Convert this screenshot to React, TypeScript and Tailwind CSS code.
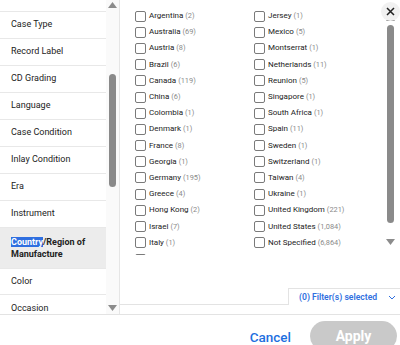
import React from 'react';

const CATEGORIES = [
  'Case Type',
  'Record Label',
  'CD Grading',
  'Language',
  'Case Condition',
  'Inlay Condition',
  'Era',
  'Instrument',
];

const COL_A: [string, string][] = [
  ['Argentina', '(2)'],
  ['Australia', '(69)'],
  ['Austria', '(8)'],
  ['Brazil', '(6)'],
  ['Canada', '(119)'],
  ['China', '(6)'],
  ['Colombia', '(1)'],
  ['Denmark', '(1)'],
  ['France', '(8)'],
  ['Georgia', '(1)'],
  ['Germany', '(195)'],
  ['Greece', '(4)'],
  ['Hong Kong', '(2)'],
  ['Israel', '(7)'],
  ['Italy', '(1)'],
];

const COL_B: [string, string][] = [
  ['Jersey', '(1)'],
  ['Mexico', '(5)'],
  ['Montserrat', '(1)'],
  ['Netherlands', '(11)'],
  ['Reunion', '(5)'],
  ['Singapore', '(1)'],
  ['South Africa', '(1)'],
  ['Spain', '(11)'],
  ['Sweden', '(1)'],
  ['Switzerland', '(1)'],
  ['Taiwan', '(4)'],
  ['Ukraine', '(1)'],
  ['United Kingdom', '(221)'],
  ['United States', '(1,084)'],
  ['Not Specified', '(6,864)'],
];

function Arrow({ up }: { up?: boolean }) {
  return (
    <svg width="9" height="6" viewBox="0 0 9 6" aria-hidden>
      <path d={up ? 'M4.5 0 L9 6 L0 6 Z' : 'M0 0 L9 0 L4.5 6 Z'} fill="#8c8c8c" />
    </svg>
  );
}

function Box() {
  return <span className="h-[11px] w-[11px] shrink-0 rounded-[2px] border border-[#7a7a7a] bg-white" />;
}

function CountryRow({ name, count }: { name: string; count: string }) {
  return (
    <label className="flex h-[16.2px] shrink-0 items-center gap-[3px]">
      <Box />
      <span className="whitespace-nowrap text-[8px] text-[#222]">
        {name} <span className="text-[7.4px] text-[#8a8a8a]">{count}</span>
      </span>
    </label>
  );
}

export default function App() {
  return (
    <div
      className="relative flex h-[345px] w-[400px] flex-col overflow-hidden bg-white"
      style={{ fontFamily: 'Roboto, "Liberation Sans", sans-serif' }}
    >
      <div className="flex h-[315px] shrink-0 border-b border-[#e3e3e3]">
        {/* category list */}
        <div className="flex w-[120px] shrink-0 border-r border-[#e6e6e6]">
          <div className="w-[106px] shrink-0 overflow-hidden">
            <div className="mt-[-15px] flex flex-col">
              <div className="h-[27px] border-b border-[#e8e8e8]" />
              {CATEGORIES.map((c) => (
                <div
                  key={c}
                  className="flex h-[27px] items-center border-b border-[#e8e8e8] pl-[11px] text-[9px] text-[#222]"
                >
                  {c}
                </div>
              ))}
              <div className="flex h-[41px] items-center border-b border-[#e8e8e8] bg-[#ececec] pl-[11px] text-[9px] font-bold leading-[12px] text-[#222]">
                <span>
                  <span className="bg-[#2f6fe0] text-white">Country</span>/Region of
                  <br />
                  Manufacture
                </span>
              </div>
              <div className="flex h-[26px] items-center border-b border-[#e8e8e8] pl-[11px] text-[9px] text-[#222]">
                Color
              </div>
              <div className="flex h-[27px] items-center pl-[11px] text-[9px] text-[#222]">
                Occasion
              </div>
            </div>
          </div>
          <div className="flex w-[13px] shrink-0 flex-col items-center bg-[#fafafa] pt-[2px]">
            <Arrow up />
            <div className="mt-[66px] h-[113px] w-[7px] rounded-full bg-[#8a8a8a]" />
            <div className="flex-1" />
            <div className="mb-[3px]">
              <Arrow />
            </div>
          </div>
        </div>

        {/* country checkboxes */}
        <div className="flex min-w-0 flex-1 flex-col">
          <div className="flex h-[255px] shrink-0">
            <div className="flex flex-1 overflow-hidden pl-[15px] pt-[8px]">
              <div className="flex w-[119px] shrink-0 flex-col">
                {COL_A.map(([n, c]) => (
                  <CountryRow key={n} name={n} count={c} />
                ))}
                <div className="mt-[3px] flex">
                  <Box />
                </div>
              </div>
              <div className="flex flex-col">
                {COL_B.map(([n, c]) => (
                  <CountryRow key={n} name={n} count={c} />
                ))}
              </div>
            </div>
            <div className="flex w-[20px] shrink-0 flex-col items-center pt-[15px]">
              <Arrow up />
              <div className="mt-[4px] h-[198px] w-[7px] rounded-full bg-[#8a8a8a]" />
              <div className="mt-[16px]">
                <Arrow />
              </div>
            </div>
          </div>
          <div className="flex flex-1 items-end">
            <div className="flex h-[17px] flex-1 border-b border-[#e3e3e3]" />
            <div className="flex h-[17px] w-[112px] items-center justify-between border-l border-t border-[#e3e3e3] pl-[10px] pr-[4px] text-[8.6px] font-semibold text-[#2f6fe0]">
              <span>(0) Filter(s) selected</span>
              <svg width="8" height="5" viewBox="0 0 8 5" aria-hidden>
                <path d="M1 1 L4 4 L7 1" fill="none" stroke="#2f6fe0" strokeWidth="1" />
              </svg>
            </div>
          </div>
          <div className="h-[9px]" />
        </div>
      </div>

      {/* footer */}
      <div className="flex flex-1 items-start justify-end gap-[19px] pr-[3px] pt-[6px]">
        <button className="mt-[6px] text-[13.5px] font-medium text-[#1d6fe0]">Cancel</button>
        <button className="h-[30px] w-[87px] rounded-full bg-[#c9c9c9] text-[14px] font-bold text-white">
          Apply
        </button>
      </div>

      {/* close */}
      <button className="absolute right-[0px] top-[2px] flex h-[19px] w-[19px] items-center justify-center rounded-full bg-[#f1f1f1]">
        <svg width="9" height="9" viewBox="0 0 9 9" aria-hidden>
          <path d="M1 1 L8 8 M8 1 L1 8" stroke="#222" strokeWidth="1.5" />
        </svg>
      </button>
    </div>
  );
}
